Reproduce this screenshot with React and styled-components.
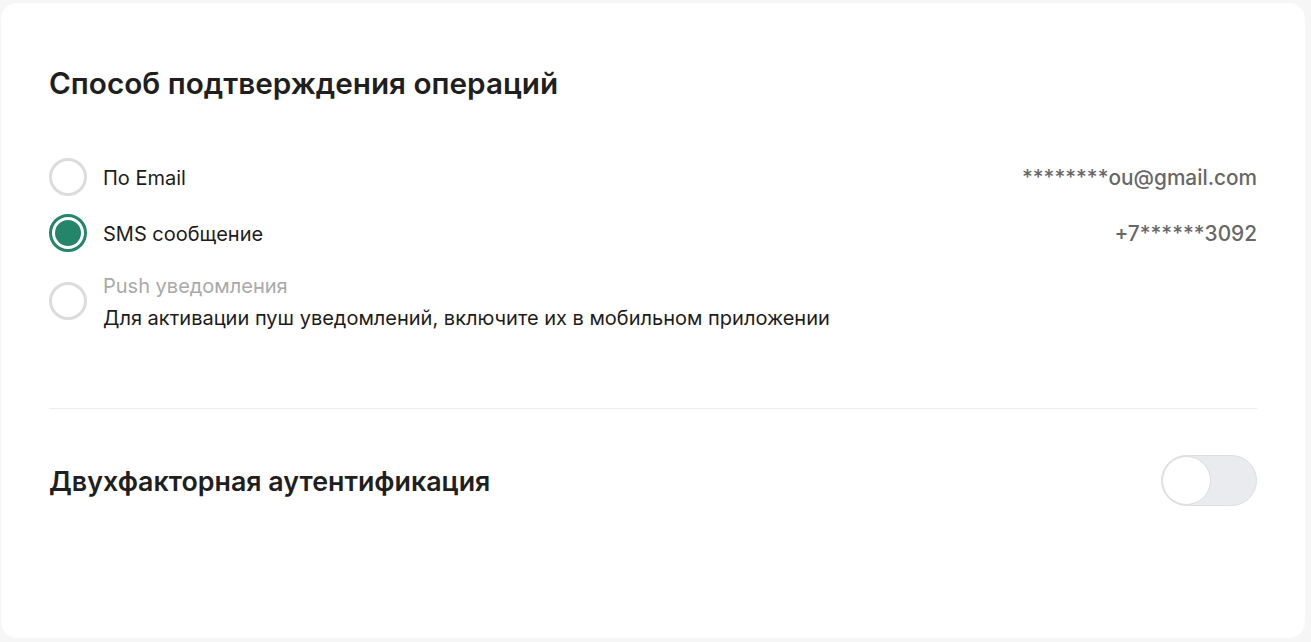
import React, { useState } from 'react'
import styled, { createGlobalStyle } from 'styled-components'

const GlobalStyle = createGlobalStyle`
  html, body {
    margin: 0;
    padding: 0;
    background: #f6f6f6;
  }
  body {
    font-family: Inter, "Noto Sans", "Liberation Sans", sans-serif;
    color: #1c1c1c;
  }
`

const Page = styled.div`
  padding: 3px 6px 4px 1px;
`

const Card = styled.section`
  height: 635px;
  box-sizing: border-box;
  background: #ffffff;
  border-radius: 16px;
  padding: 62px 48px 0 48px;
  display: flex;
  flex-direction: column;
`

const Title = styled.h2`
  margin: 0;
  font-size: ${p => p.$size || 29.7}px;
  line-height: 36px;
  font-weight: 600;
  color: #1f1f1f;
`

const Options = styled.div`
  display: flex;
  flex-direction: column;
  gap: 13px;
  margin-top: 54px;
`

const Option = styled.label`
  display: flex;
  align-items: center;
  gap: 16px;
  cursor: ${p => (p.$disabled ? 'default' : 'pointer')};
`

const Radio = styled.span`
  flex: none;
  width: 38px;
  height: 38px;
  margin: 2.5px 0;
  box-sizing: border-box;
  border-radius: 50%;
  border: 3px solid ${p => (p.$checked ? '#25856a' : '#dcdcdc')};
  padding: 3px;
  background: #fff;

  &::after {
    content: '';
    display: ${p => (p.$checked ? 'block' : 'none')};
    width: 100%;
    height: 100%;
    border-radius: 50%;
    background: #25856a;
  }
`

const Label = styled.div`
  flex: 1;
  display: flex;
  flex-direction: column;
  margin-top: 3px;
`

const Name = styled.span`
  font-size: 20px;
  line-height: 32px;
  color: ${p => (p.$muted ? '#a9a9a9' : '#1c1c1c')};
`

const Hint = styled.span`
  font-size: 20px;
  line-height: 32px;
  color: #1c1c1c;
`

const Value = styled.span`
  margin-top: 3px;
  font-size: 20.8px;
  line-height: 32px;
  font-weight: 500;
  color: #676767;
`

const Divider = styled.hr`
  margin: 74px 0 0;
  border: 0;
  border-top: 1px solid #ececec;
`

const Row = styled.div`
  display: flex;
  align-items: center;
  justify-content: space-between;
  margin-top: 46px;
`

const Toggle = styled.button`
  width: 96px;
  height: 51px;
  padding: 0;
  box-sizing: border-box;
  border-radius: 26px;
  border: 1px solid #dcdee1;
  background: ${p => (p.$on ? '#25856a' : '#e9ebee')};
  display: flex;
  align-items: center;
  justify-content: ${p => (p.$on ? 'flex-end' : 'flex-start')};
  cursor: pointer;
`

const Knob = styled.span`
  width: 49px;
  height: 49px;
  box-sizing: border-box;
  border-radius: 50%;
  background: #fff;
  border: 1px solid #dcdcdc;
`

const methods = [
  { id: 'email', name: 'По Email', value: '********ou@gmail.com' },
  { id: 'sms', name: 'SMS сообщение', value: '+7******3092' },
  {
    id: 'push',
    name: 'Push уведомления',
    hint: 'Для активации пуш уведомлений, включите их в мобильном приложении',
    disabled: true,
  },
]

export default function App() {
  const [method, setMethod] = useState('sms')
  const [twoFactor, setTwoFactor] = useState(false)

  return (
    <Page>
      <GlobalStyle />
      <Card>
        <Title>Способ подтверждения операций</Title>
        <Options>
          {methods.map(m => (
            <Option
              key={m.id}
              $disabled={m.disabled}
              onClick={() => !m.disabled && setMethod(m.id)}
            >
              <Radio $checked={method === m.id} />
              <Label>
                <Name $muted={m.disabled}>{m.name}</Name>
                {m.hint && <Hint>{m.hint}</Hint>}
              </Label>
              {m.value && <Value>{m.value}</Value>}
            </Option>
          ))}
        </Options>
        <Divider />
        <Row>
          <Title $size={26.8}>Двухфакторная аутентификация</Title>
          <Toggle $on={twoFactor} onClick={() => setTwoFactor(!twoFactor)}>
            <Knob />
          </Toggle>
        </Row>
      </Card>
    </Page>
  )
}
